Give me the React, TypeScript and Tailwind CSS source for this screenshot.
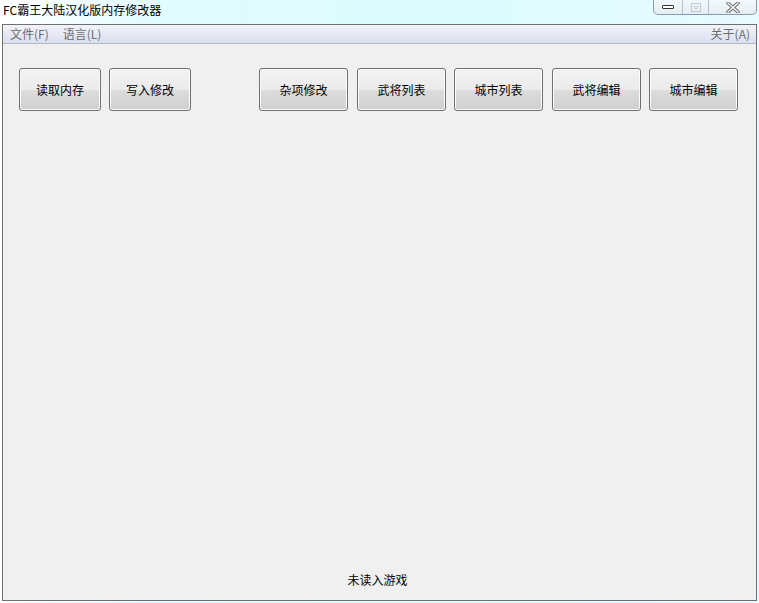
const font = "font-['Microsoft_YaHei','Noto_Sans_CJK_SC',sans-serif]";

const leftButtons = ["读取内存", "写入修改"];
const rightButtons = [
  { label: "杂项修改", cls: "" },
  { label: "武将列表", cls: "ml-[9px]" },
  { label: "城市列表", cls: "ml-[8px]" },
  { label: "武将编辑", cls: "ml-[9px]" },
  { label: "城市编辑", cls: "ml-[8px]" },
];

function Btn({ label, wide, className = "" }: { label: string; wide?: boolean; className?: string }) {
  return (
    <button
      className={`flex h-[43px] ${wide ? "w-[89px]" : "w-[82px]"} items-center justify-center rounded-[3px] border border-[#707070] bg-[linear-gradient(#f2f2f2_0%,#ebebeb_50%,#dddddd_50%,#cfcfcf_100%)] text-[12px] text-black shadow-[inset_0_0_0_1px_#fcfcfc] ${className}`}
    >
      {label}
    </button>
  );
}

function WindowControls() {
  return (
    <div className="flex h-[15px] overflow-hidden rounded-b-[5px] border border-t-0 border-[#8e9aa8] bg-[linear-gradient(#f4f9fc,#e4eef4)]">
      <div className="flex w-[29px] items-center justify-center border-r border-[#b4c0cc]">
        <div className="h-[4px] w-[12px] rounded-[1px] border border-[#333] bg-white" />
      </div>
      <div className="flex w-[26px] items-center justify-center border-r border-[#b4c0cc]">
        <div className="flex h-[9px] w-[10px] items-center justify-center border border-[#c0c8d0]">
          <div className="h-[3px] w-[4px] border border-[#c8d0d8]" />
        </div>
      </div>
      <div className="flex w-[47px] items-center justify-center">
        <svg width="14" height="11" viewBox="0 0 14 11">
          <path d="M2 1 L12 10 M12 1 L2 10" stroke="#6a6a6a" strokeWidth="3.4" strokeLinecap="round" />
          <path d="M2 1 L12 10 M12 1 L2 10" stroke="#f4f4f4" strokeWidth="1.6" strokeLinecap="round" />
        </svg>
      </div>
    </div>
  );
}

export default function App() {
  return (
    <div className={`flex h-[603px] w-[759px] flex-col bg-[linear-gradient(90deg,#ffffff_0%,#e2fbff_20%,#dcfcff_60%,#e8fbff_100%)] ${font}`}>
      <div className="flex h-[24px] items-start justify-between">
        <span className="pl-[3px] pt-[1px] text-[12px] leading-[18px] text-black">FC霸王大陆汉化版内存修改器</span>
        <div className="mr-[2px]">
          <WindowControls />
        </div>
      </div>

      <div className="ml-[2px] mr-[2px] mb-[2px] flex flex-1 flex-col border border-[#707070] bg-[#f0f0f0]">
        <div className="flex h-[19px] items-center justify-between border-b border-[#b4b8cc] bg-[linear-gradient(#f2f3fa,#dcdff0)] text-[12px] text-[#6d6d6d]">
          <div className="flex gap-[14px] pl-[7px]">
            <span>文件(F)</span>
            <span>语言(L)</span>
          </div>
          <span className="pr-[6px]">关于(A)</span>
        </div>

        <div className="flex flex-1 flex-col">
          <div className="flex pl-[16px] pt-[24px]">
            <div className="flex gap-[8px]">
              {leftButtons.map((b) => (
                <Btn key={b} label={b} />
              ))}
            </div>
            <div className="ml-[68px] flex">
              {rightButtons.map((b) => (
                <Btn key={b.label} label={b.label} wide className={b.cls} />
              ))}
            </div>
          </div>
          <div className="flex-1" />
          <div className="pb-[11px] pr-[4px] text-center text-[12px] text-black">未读入游戏</div>
        </div>
      </div>
    </div>
  );
}
